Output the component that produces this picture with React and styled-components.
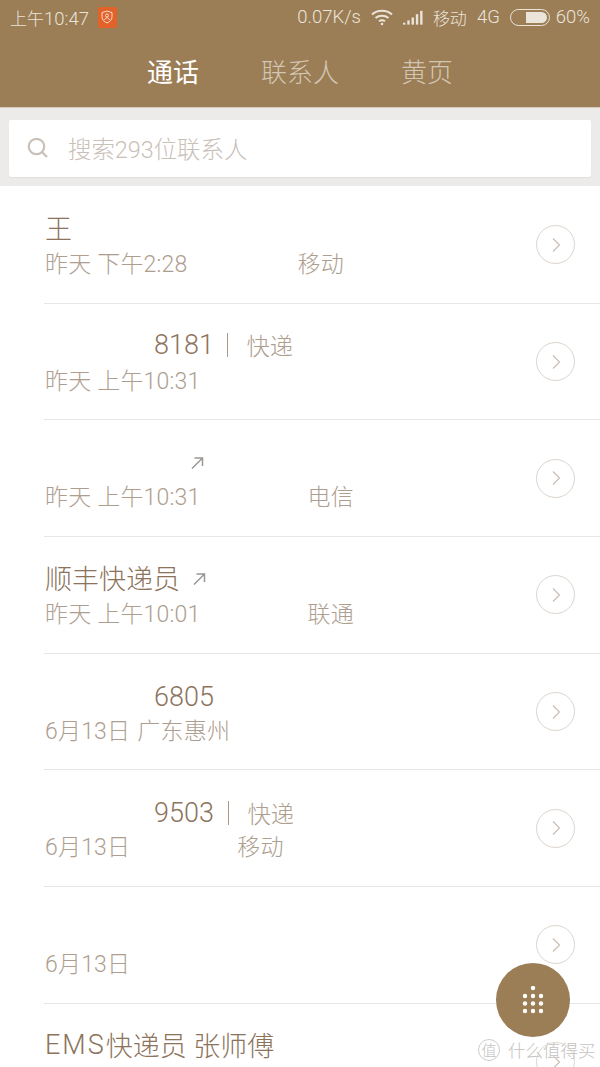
import React from 'react';
import styled, { createGlobalStyle } from 'styled-components';

const GlobalStyle = createGlobalStyle`
  html, body {
    margin: 0;
    padding: 0;
    background: white;
  }
`;

const Phone = styled.div`
  position: relative;
  width: 600px;
  height: 1067px;
  overflow: hidden;
  background: white;
  font-family: Roboto, "Noto Sans CJK SC", sans-serif;
  font-weight: 300;
`;

const Header = styled.header`
  height: 108px;
  background: #9b7d56;
  border-bottom: 1px solid #d8cbb9;
  box-sizing: border-box;
`;

const StatusBar = styled.div`
  height: 34px;
  padding: 0 10px;
  display: flex;
  align-items: center;
  color: #eae4da;
  font-size: 18.5px;
`;

const StatusLeft = styled.div`
  display: flex;
  align-items: center;
  gap: 9px;
  flex: 1;
`;

const StatusRight = styled.div`
  display: flex;
  align-items: center;
  gap: ${props => props.$gap || 10}px;
`;

const StatusCn = styled.span`
  font-size: 17px;
`;

const ShieldBadge = styled.div`
  width: 19px;
  height: 21px;
  border-radius: 2px;
  background: #e2622a;
  display: flex;
  align-items: center;
  justify-content: center;
`;

const Tabs = styled.nav`
  height: 72px;
  box-sizing: border-box;
  display: flex;
  justify-content: center;
  align-items: center;
  gap: 62px;
`;

const Tab = styled.div`
  font-size: 26px;
  color: ${props => (props.$active ? '#ffffff' : '#d3c6b3')};
  font-weight: ${props => (props.$active ? 400 : 300)};
`;

const SearchArea = styled.div`
  height: 78px;
  padding: 12px 9px 9px;
  box-sizing: border-box;
  background: #ecebe9;
`;

const SearchBox = styled.div`
  height: 57px;
  padding: 0 0 1px 18px;
  box-sizing: border-box;
  background: white;
  border-radius: 2px;
  box-shadow: 0 1px 1px rgba(0, 0, 0, 0.06);
  display: flex;
  align-items: center;
  gap: 19px;
  color: #c9c0b8;
  font-size: 23.4px;
`;

const List = styled.div`
  padding-top: 1px;
`;

const Row = styled.div`
  height: 116.7px;
  margin-left: 44px;
  padding-right: 25px;
  box-sizing: border-box;
  border-bottom: 1px solid #e8e6e3;
  display: flex;
  align-items: center;
  justify-content: space-between;
`;

const RowText = styled.div`
  padding-left: 1px;
  display: flex;
  flex-direction: column;
  gap: 2px;
`;

const Title = styled.div`
  height: 32px;
  padding-top: ${props => props.$drop || 0}px;
  box-sizing: border-box;
  display: flex;
  align-items: center;
  color: #8c735c;
  font-size: 27px;
  white-space: nowrap;
`;

const Sub = styled.div`
  height: 32px;
  display: flex;
  align-items: center;
  color: #ae9e90;
  font-size: 23px;
  letter-spacing: 0.2px;
  white-space: nowrap;
`;

/* blanked-out part of a number or location */
const Blank = styled.span`
  display: inline-block;
  width: ${props => props.$w}px;
`;

const WideLatin = styled.span`
  letter-spacing: 2px;
`;

const Sep = styled.span`
  width: 1.5px;
  height: 24px;
  margin: ${props => (props.$wide ? '0 18px 0 14px' : '0 18px 0 13px')};
  background: #a8978a;
`;

const Tag = styled.span`
  font-size: 23.3px;
  color: #ae9e90;
`;

const CallOut = styled.svg`
  width: 14px;
  height: 14px;
  margin: 3px 0 0 ${props => props.$ml || 12}px;
`;

const DetailButton = styled.div`
  width: 39px;
  height: 39px;
  box-sizing: border-box;
  border: 1px solid #ddd5cd;
  border-radius: 50%;
  display: flex;
  align-items: center;
  justify-content: center;
  flex-shrink: 0;
`;

const DialFab = styled.div`
  position: absolute;
  left: 496px;
  top: 963px;
  width: 74px;
  height: 74px;
  border-radius: 50%;
  background: #9b7d56;
  display: flex;
  align-items: center;
  justify-content: center;
`;

const Watermark = styled.div`
  position: absolute;
  left: 478px;
  top: 1037px;
  display: flex;
  align-items: center;
  gap: 8px;
  color: #c4c2c0;
  font-size: 17.5px;
  font-family: "Noto Sans CJK SC", sans-serif;
  text-shadow: 0 0 2px white;
`;

const WatermarkBadge = styled.span`
  width: 20px;
  height: 20px;
  border: 1.5px solid #cfcdcb;
  border-radius: 50%;
  display: flex;
  align-items: center;
  justify-content: center;
  font-size: 15px;
`;

const calls = [
  { title: '王', sub: '昨天 下午2:28', subBlank: 110, place: '移动' },
  { blank: 109, title: '8181', tag: '快递', sub: '昨天 上午10:31' },
  { out: 145, sub: '昨天 上午10:31', subBlank: 107, place: '电信' },
  { title: '顺丰快递员', out: 12, sub: '昨天 上午10:01', subBlank: 107, place: '联通' },
  { blank: 109, title: '6805', drop: 4, sub: '6月13日', subBlank: 7, place: '广东惠州' },
  { blank: 109, title: '9503', drop: 4, tag: '快递', wideSep: true, sub: '6月13日', subBlank: 107, place: '移动' },
  { sub: '6月13日' },
  { title: <><WideLatin>EMS</WideLatin>快递员 张师傅</> },
];

const Shield = () => (
  <svg width="12" height="14" viewBox="0 0 12 14" fill="none" stroke="#f7dccb" strokeWidth="1">
    <path d="M6 1l5 1.6v4.2c0 3-2.2 5-5 6.2-2.8-1.2-5-3.2-5-6.2V2.6z" />
    <circle cx="6" cy="5.5" r="1.5" />
    <path d="M3.5 10c.5-1.5 1.4-2.2 2.5-2.2s2 .7 2.500 2.200" />
  </svg>
);

const Wifi = () => (
  <svg width="22" height="17" viewBox="0 0 22 17" fill="none" stroke="#eae4da" strokeWidth="2">
    <path d="M1 5.500c5.500-5 14.500-5 20 0" />
    <path d="M4.500 9c3.500-3 9.500-3 13 0" />
    <path d="M8 12.300c1.700-1.300 4.300-1.300 6 0" />
    <circle cx="11" cy="15" r="1.300" fill="#eae4da" stroke="none" />
  </svg>
);

const Signal = () => (
  <svg width="20" height="15" viewBox="0 0 21 15" fill="#eae4da">
    <rect x="0" y="13" width="2.500" height="2" />
    <rect x="4.500" y="10.500" width="2.500" height="4.500" />
    <rect x="9" y="7.500" width="2.500" height="7.500" />
    <rect x="13.500" y="4" width="2.500" height="11" />
    <rect x="18" y="0.500" width="2.500" height="14.500" />
  </svg>
);

const Battery = () => (
  <svg width="40" height="17" viewBox="0 0 40 17">
    <rect x="0.500" y="0.500" width="39" height="16" rx="8" fill="none" stroke="#eae4da" />
    <path d="M16 3h15.500a5.500 5.500 0 0 1 0 11H16z" fill="#eae4da" />
  </svg>
);

const Search = () => (
  <svg width="22" height="22" viewBox="0 0 22 22" fill="none" stroke="#c9c0b8" strokeWidth="2.200">
    <circle cx="9.500" cy="9.500" r="7.700" />
    <path d="M15 15l5 5" />
  </svg>
);

const Chevron = () => (
  <svg width="10" height="16" viewBox="0 0 10 16" fill="none" stroke="#cbbfb4" strokeWidth="1.200">
    <path d="M2 1.500L8.500 8 2 14.500" />
  </svg>
);

const OutArrow = ({ ml }) => (
  <CallOut $ml={ml} viewBox="0 0 14 14" fill="none" stroke="#9a9794" strokeWidth="1.500">
    <path d="M2 12.500L12 2.500M4.500 2h8v8" />
  </CallOut>
);

const DialPad = () => {
  const dots = [[11, 2], [3, 10], [11, 10], [19, 10], [3, 17.5], [11, 17.5], [19, 17.5], [3, 25], [11, 25], [19, 25]];
  return (
    <svg width="22" height="28" viewBox="0 0 22 28" fill="white">
      {dots.map(([cx, cy]) => (
        <circle key={`${cx}-${cy}`} cx={cx} cy={cy} r="2.200" />
      ))}
    </svg>
  );
};

const CallRow = ({ call }) => (
  <Row>
    <RowText>
      <Title $drop={call.drop}>
        {call.blank > 0 && <Blank $w={call.blank} />}
        {call.title}
        {call.tag && <Sep $wide={call.wideSep} />}
        {call.tag && <Tag>{call.tag}</Tag>}
        {call.out && <OutArrow ml={call.out} />}
      </Title>
      <Sub>
        {call.sub}
        {call.subBlank && <Blank $w={call.subBlank} />}
        {call.place}
      </Sub>
    </RowText>
    <DetailButton>
      <Chevron />
    </DetailButton>
  </Row>
);

export default function App() {
  return (
    <Phone>
      <GlobalStyle />
      <Header>
        <StatusBar>
          <StatusLeft>
            <span><StatusCn>上午</StatusCn>10:47</span>
            <ShieldBadge>
              <Shield />
            </ShieldBadge>
          </StatusLeft>
          <StatusRight>
            <span>0.07K/s</span>
            <Wifi />
            <Signal />
            <StatusCn>移动</StatusCn>
            <span>4G</span>
            <StatusRight $gap={6}>
              <Battery />
              <span>60%</span>
            </StatusRight>
          </StatusRight>
        </StatusBar>
        <Tabs>
          <Tab $active>通话</Tab>
          <Tab>联系人</Tab>
          <Tab>黄页</Tab>
        </Tabs>
      </Header>
      <SearchArea>
        <SearchBox>
          <Search />
          <span>搜索293位联系人</span>
        </SearchBox>
      </SearchArea>
      <List>
        {calls.map((call, i) => (
          <CallRow key={i} call={call} />
        ))}
      </List>
      <DialFab>
        <DialPad />
      </DialFab>
      <Watermark>
        <WatermarkBadge>值</WatermarkBadge>
        <span>什么值得买</span>
      </Watermark>
    </Phone>
  );
}
